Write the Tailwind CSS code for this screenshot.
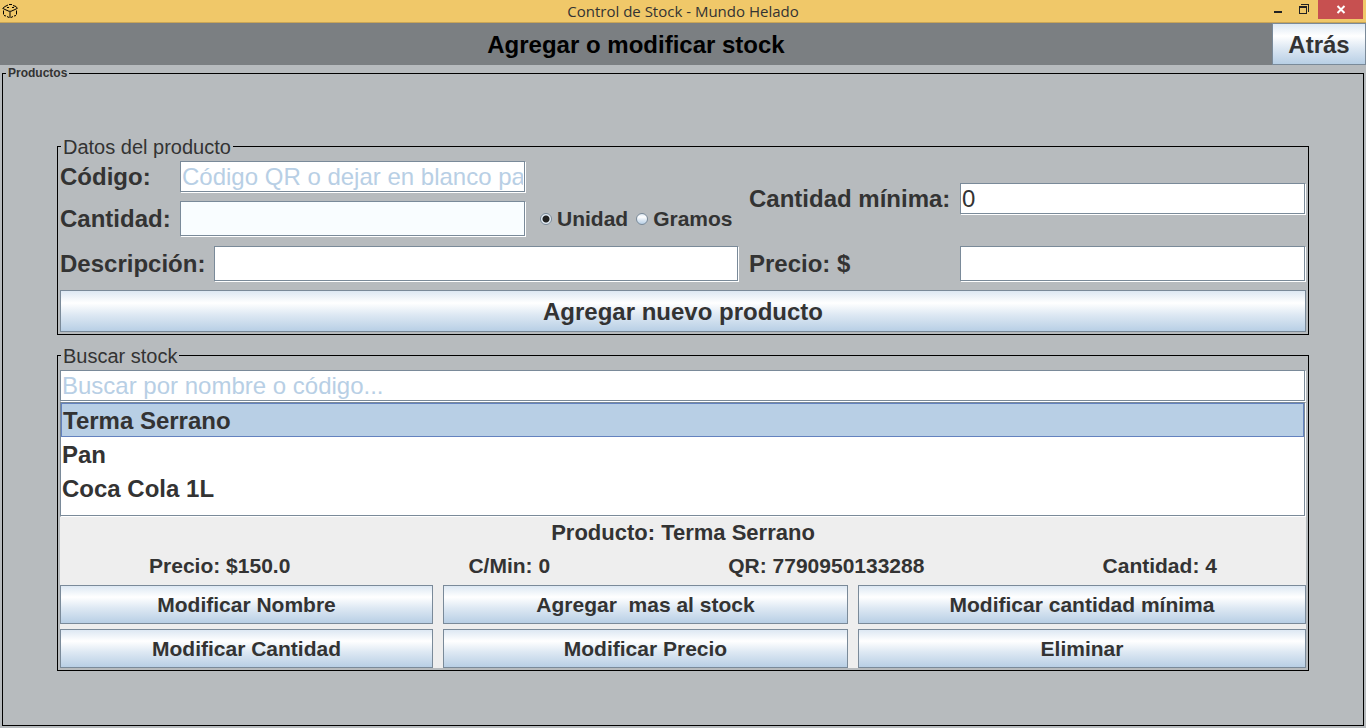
<!DOCTYPE html>
<html lang="es">
<head>
<meta charset="utf-8">
<title>Control de Stock - Mundo Helado</title>
<script src="https://cdn.jsdelivr.net/npm/@tailwindcss/browser@4"></script>
</head>
<body class="flex min-h-screen flex-col bg-[#b7bbbe] font-['Liberation_Sans',Arial,sans-serif] text-[#333]">
<header>
  <div class="relative flex h-[23px] items-center justify-center border-b border-[#c9a557] bg-[#f0c869]">
    <svg class="absolute left-[2px] top-[3px]" width="16" height="16" viewBox="0 0 16 16" fill="none" stroke="#000"><path d="M7 1.500h3M3 3.500l3-1.500M11 2.500l3 1M.5 5.500 3 3.500M15.500 5.500 14 3.500M1 5.500l2 1M15 5.500l-2 1M5 4.500h2M10 4.500h2M3 6.500l4.500 2M13 6.500l-4.500 2M8 7.500V15M1.500 7.500v4M14.500 7.500v4M2 12.500l2 .5M5 13.500l2 1M14 12.500l-2 .5M11 13.500l-2 1"/></svg>
    <span class="font-['Open_Sans',sans-serif] text-[15px] leading-[22px] text-[#333]">Control de Stock - Mundo Helado</span>
    <div class="absolute right-[3px] top-0 flex">
      <button aria-label="Minimizar" class="h-[19px] w-[26px]"><svg width="26" height="19" viewBox="0 0 26 19"><path d="M8 11h8v2H8z" fill="#222"/></svg></button>
      <button aria-label="Restaurar" class="h-[19px] w-[26px]"><svg width="26" height="19" viewBox="0 0 26 19" fill="#222"><path fill-rule="evenodd" d="M7 6h8v8H7zM8 8v5h6V8zM9 4h8v8h-1V5H9z"/></svg></button>
      <button aria-label="Cerrar" class="h-[19px] w-[45px] bg-[#c75050]"><svg width="45" height="19" viewBox="0 0 45 19" stroke="#fff" stroke-width="2"><path d="m19.500 6 7 7m0-7-7 7"/></svg></button>
    </div>
  </div>
  <div class="flex h-[42px] items-stretch bg-[#7b7f82]">
    <h1 class="flex flex-1 items-center justify-center pt-[2px] text-[24px] font-bold text-black">Agregar o modificar stock</h1>
    <button class="w-[94px] border border-[#7a8a99] bg-[linear-gradient(#dde8f3,#fff_30%,#dde8f3_60%,#b8cfe5)] pt-[2px] text-[24px] font-bold">Atrás</button>
  </div>
</header>
<main class="flex flex-1 flex-col px-[2px] pb-[2px]">
<fieldset class="flex-1 border border-black">
  <legend class="ml-[3px] px-[2px] text-[12px] font-bold leading-[16px]">Productos</legend>
  <div class="px-[54px] pt-[54px]">

  <fieldset class="border border-black p-[2px] pt-[3px]">
    <legend class="px-[2px] pt-[2px] text-[20px] leading-[21px] ml-[1px]">Datos del producto</legend>
    <div class="grid grid-cols-[679fr_557fr] gap-x-[10px] text-[24px] font-bold leading-[30px]">
      <div class="flex min-w-0 flex-col">
        <div class="flex items-center">
          <label for="codigo" class="w-[120px]">Código:</label>
          <input id="codigo" placeholder="Código QR o dejar en blanco para generar" class="h-[31px] w-[345px] border border-[#7a8a99] bg-white px-[1px] font-normal shadow-[1px_1px_0_#fff] placeholder:text-[#b8cfe5]">
        </div>
        <div class="mt-[9px] flex items-center">
          <label for="cantidad" class="w-[120px]">Cantidad:</label>
          <input id="cantidad" class="h-[35px] w-[345px] border border-[#7a8a99] bg-[#f9fdff] px-[1px] font-normal shadow-[1px_1px_0_#fff]">
          <div class="ml-[15px] flex items-center gap-[8px] text-[21px]">
            <label class="flex items-center gap-[5px]"><input type="radio" name="medida" checked class="size-[12px] appearance-none rounded-full border border-[#7a8a99] bg-[radial-gradient(circle,#222_3px,#e3ecf5_4px)]">Unidad</label>
            <label class="flex items-center gap-[5px]"><input type="radio" name="medida" class="size-[12px] appearance-none rounded-full border border-[#7a8a99] bg-[linear-gradient(#dde8f3,#fff_30%,#dde8f3_60%,#b8cfe5)]">Gramos</label>
          </div>
        </div>
        <div class="mt-[10px] flex items-center">
          <label for="descripcion" class="w-[154px]">Descripción:</label>
          <input id="descripcion" class="mr-px h-[35px] min-w-0 flex-1 border border-[#7a8a99] bg-white px-[1px] font-normal shadow-[1px_1px_0_#fff]">
        </div>
      </div>
      <div class="flex min-w-0 flex-col justify-end gap-[32px]">
        <div class="flex items-center">
          <label for="minima" class="w-[211px]">Cantidad mínima:</label>
          <input id="minima" value="0" class="mr-px h-[31px] min-w-0 flex-1 border border-[#7a8a99] bg-white px-[1px] font-normal shadow-[1px_1px_0_#fff]">
        </div>
        <div class="flex items-center">
          <label for="precio" class="w-[211px]">Precio: $</label>
          <input id="precio" class="mr-px h-[35px] min-w-0 flex-1 border border-[#7a8a99] bg-white px-[1px] font-normal shadow-[1px_1px_0_#fff]">
        </div>
      </div>
    </div>
    <button class="mt-[9px] block h-[42px] w-full border border-[#7a8a99] bg-[linear-gradient(#dde8f3,#fff_30%,#dde8f3_60%,#b8cfe5)] pt-[2px] text-[24px] font-bold">Agregar nuevo producto</button>
  </fieldset>

  <fieldset class="mt-[9px] border border-black p-[2px] pt-[3px]">
    <legend class="ml-[1px] px-[2px] pt-[2px] text-[20px] leading-[21px]">Buscar stock</legend>
    <div class="pr-px">
      <input aria-label="Buscar stock" placeholder="Buscar por nombre o código..." class="block h-[31px] w-full border border-[#7a8a99] bg-white px-[1px] text-[24px] shadow-[1px_1px_0_#fff] placeholder:text-[#b8cfe5]">
      <ul class="mt-px h-[114px] border border-[#7a8a99] bg-white text-[24px] font-bold shadow-[1px_1px_0_#fff]">
        <li class="h-[34px] border border-[#6382bf] bg-[#b8cfe5] px-[1px] pt-[2px] leading-[30px]">Terma Serrano</li>
        <li class="px-[1px] pt-[2px] leading-[32px]">Pan</li>
        <li class="px-[1px] pt-[2px] leading-[32px]">Coca Cola 1L</li>
      </ul>
    </div>
    <div class="mt-px bg-[#eee] text-[21px] font-bold leading-[34px]">
      <p class="text-center text-[22px] leading-[32px]">Producto: Terma Serrano</p>
      <div class="flex justify-around pb-[2px]">
        <span>Precio: $150.0</span><span>C/Min: 0</span><span>QR: 7790950133288</span><span>Cantidad: 4</span>
      </div>
      <div class="grid grid-cols-[373fr_405fr_448fr] gap-x-[10px] gap-y-[5px] *:h-[39px] *:border *:border-[#7a8a99] *:bg-[linear-gradient(#dde8f3,#fff_30%,#dde8f3_60%,#b8cfe5)]">
        <button>Modificar Nombre</button>
        <button class="whitespace-pre">Agregar  mas al stock</button>
        <button>Modificar cantidad mínima</button>
        <button>Modificar Cantidad</button>
        <button>Modificar Precio</button>
        <button>Eliminar</button>
      </div>
    </div>
  </fieldset>
  </div>
</fieldset>
</main>
</body>
</html>
